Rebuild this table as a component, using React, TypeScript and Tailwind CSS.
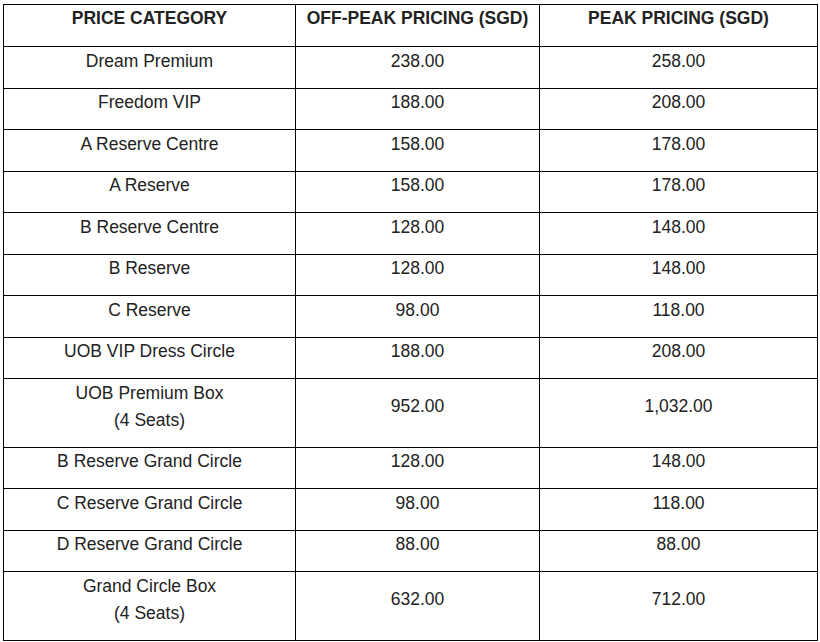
const rows: { name: string[]; offPeak: string; peak: string }[] = [
  { name: ['Dream Premium'], offPeak: '238.00', peak: '258.00' },
  { name: ['Freedom VIP'], offPeak: '188.00', peak: '208.00' },
  { name: ['A Reserve Centre'], offPeak: '158.00', peak: '178.00' },
  { name: ['A Reserve'], offPeak: '158.00', peak: '178.00' },
  { name: ['B Reserve Centre'], offPeak: '128.00', peak: '148.00' },
  { name: ['B Reserve'], offPeak: '128.00', peak: '148.00' },
  { name: ['C Reserve'], offPeak: '98.00', peak: '118.00' },
  { name: ['UOB VIP Dress Circle'], offPeak: '188.00', peak: '208.00' },
  { name: ['UOB Premium Box', '(4 Seats)'], offPeak: '952.00', peak: '1,032.00' },
  { name: ['B Reserve Grand Circle'], offPeak: '128.00', peak: '148.00' },
  { name: ['C Reserve Grand Circle'], offPeak: '98.00', peak: '118.00' },
  { name: ['D Reserve Grand Circle'], offPeak: '88.00', peak: '88.00' },
  { name: ['Grand Circle Box', '(4 Seats)'], offPeak: '632.00', peak: '712.00' },
]

const cell = 'border border-black text-center align-middle px-2 leading-[27px]'
const td = `${cell} pt-[0.5px] pb-[13px]`
const th = `${cell} pt-0 pb-[14px] font-bold uppercase`

export default function App() {
  return (
    <div className="min-h-screen bg-white pl-[3px] pt-[4px] font-['Liberation_Sans',Arial,sans-serif] text-[17.5px] text-[#222]">
      <table className="w-[814px] table-fixed border-collapse">
        <colgroup>
          <col className="w-[292px]" />
          <col className="w-[244px]" />
          <col className="w-[278px]" />
        </colgroup>
        <thead>
          <tr>
            <th className={th}>Price Category</th>
            <th className={th}>Off-Peak Pricing (SGD)</th>
            <th className={th}>Peak Pricing (SGD)</th>
          </tr>
        </thead>
        <tbody>
          {rows.map((row, i) => (
            <tr key={i}>
              <td className={td}>
                {row.name.map((line, j) => (
                  <div key={j}>{line}</div>
                ))}
              </td>
              <td className={td}>{row.offPeak}</td>
              <td className={td}>{row.peak}</td>
            </tr>
          ))}
        </tbody>
      </table>
    </div>
  )
}
